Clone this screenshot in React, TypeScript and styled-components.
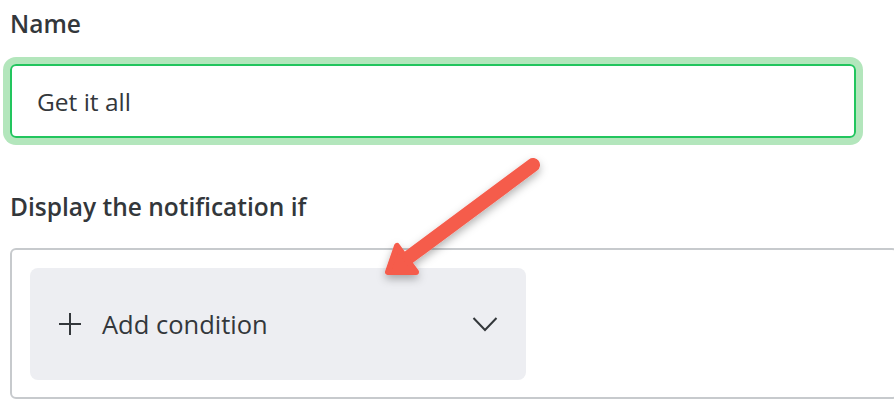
import React from "react";
import styled, { createGlobalStyle } from "styled-components";

const Global = createGlobalStyle`
  html, body { margin: 0; padding: 0; background: #ffffff; }
  body { font-family: "Open Sans", Lato, "Liberation Sans", sans-serif; color: #33373b; }
  * { box-sizing: border-box; }
`;

const Page = styled.div`
  position: relative;
  width: 894px;
  height: 406px;
  overflow: hidden;
  padding-left: 10px;
  display: flex;
  flex-direction: column;
`;

const Label = styled.div<{ $top: number }>`
  margin-top: ${(p) => p.$top}px;
  font-size: 24.5px;
  line-height: 28px;
  font-weight: 600;
  color: #33373b;
`;

const NameInput = styled.div`
  margin-top: 26px;
  width: 846px;
  height: 74px;
  border: 2px solid #22c55e;
  border-radius: 6px;
  box-shadow: 0 0 0 7px #b3e6bc;
  display: flex;
  align-items: center;
  padding-left: 25px;
  font-size: 24.5px;
  color: #33373b;
`;

const ConditionBox = styled.div`
  margin-top: 27px;
  margin-right: -4px;
  border: 2px solid #c7cacd;
  border-radius: 6px;
  padding: 18px 0 17px 18px;
`;

const AddButton = styled.div`
  width: 496px;
  height: 112px;
  background: #edeef2;
  border-radius: 8px;
  display: flex;
  align-items: center;
  padding: 0 28px 0 28px;
  color: #33373b;
`;

const ButtonText = styled.span`
  flex: 1;
  margin-left: 20px;
  font-size: 25.5px;
`;

const Overlay = styled.svg`
  position: absolute;
  left: 0;
  top: 0;
  pointer-events: none;
`;

export default function App() {
  return (
    <>
      <Global />
      <Page>
        <Label $top={10}>Name</Label>
        <NameInput>Get it all</NameInput>
        <Label $top={55}>Display the notification if</Label>
        <ConditionBox>
          <AddButton>
            <svg width="24" height="24" viewBox="0 0 24 24">
              <path d="M12 1v22M1 12h22" stroke="#33373b" strokeWidth="2" fill="none" />
            </svg>
            <ButtonText>Add condition</ButtonText>
            <svg width="26" height="16" viewBox="0 0 26 16">
              <path d="M1.5 2l11.5 12L24.5 2" stroke="#33373b" strokeWidth="2" fill="none" />
            </svg>
          </AddButton>
        </ConditionBox>
        <Overlay width="894" height="406" viewBox="0 0 894 406">
          <defs>
            <filter id="sh" x="-20%" y="-20%" width="140%" height="140%">
              <feDropShadow dx="0" dy="4" stdDeviation="4" floodColor="#000" floodOpacity="0.3" />
            </filter>
          </defs>
          <g filter="url(#sh)" fill="#f55b4b" stroke="#f55b4b" strokeLinejoin="round" strokeLinecap="round">
            <path d="M533 165L405 260" strokeWidth="14" fill="none" />
            <path d="M397 246L388 272L416 272Z" strokeWidth="6" />
          </g>
        </Overlay>
      </Page>
    </>
  );
}
